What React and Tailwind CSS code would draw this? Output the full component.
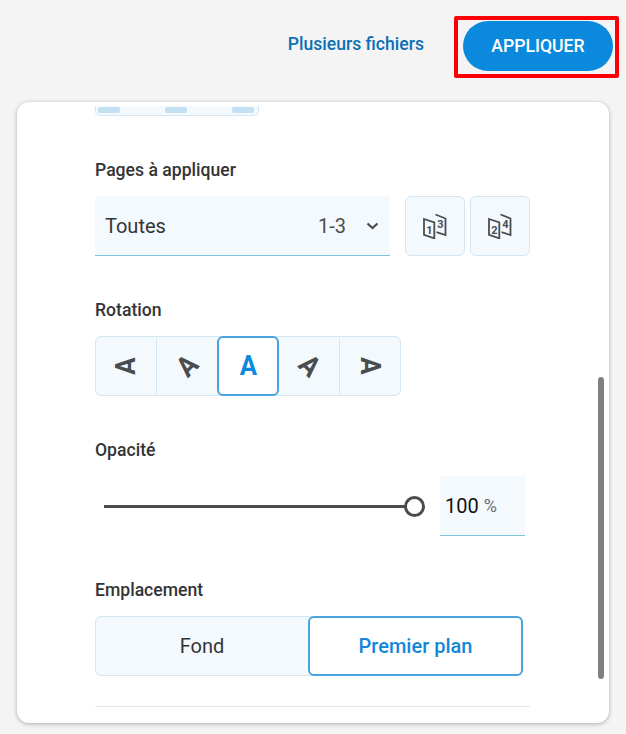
import React from "react";

const F = { fontFamily: "Roboto, 'Liberation Sans', sans-serif" };

function PagesIcon({ a, b }) {
  return (
    <svg className="shrink-0" width="24" height="26" viewBox="0 0 24 26" fill="none" stroke="#4a4d50" strokeWidth="1.800" strokeLinejoin="miter">
      <path d="M1 6 11.300 9.500V25.300L1 21.800z" />
      <path d="M12.500 1.500 22.500 5.500V22L13.500 19.200" />
      <text x="3.200" y="20.500" fontSize="11" fontWeight="700" stroke="none" fill="#4a4d50" style={F}>{a}</text>
      <text x="14.300" y="15" fontSize="11" fontWeight="700" stroke="none" fill="#4a4d50" style={F}>{b}</text>
    </svg>
  );
}

function Label({ children, className = "" }) {
  return <div className={`h-5 leading-5 text-[17.6px] font-medium text-[#333436] ${className}`}>{children}</div>;
}

function Glyph({ className }) {
  return <span className={`text-[28px] leading-none font-bold inline-block scale-x-[0.92] ${className}`}>A</span>;
}

export default function App() {
  return (
    <div className="h-[734px] w-[626px] flex flex-col bg-[#f4f4f4] overflow-hidden" style={F}>
      <div className="h-[102px] shrink-0 flex items-start justify-end pt-[16px] pr-[7px]">
        <span className="text-[17.6px] font-medium text-[#0b70b5] mr-[30px] mt-[18px] leading-5">Plusieurs fichiers</span>
        <div className="border-[4px] border-[#fb0007] rounded-[2px] pl-[5px] pr-[2px] pt-[1px] pb-[3px]">
          <button className="w-[150px] h-[50px] rounded-full bg-[#0a89dd] text-white text-[17.6px] font-medium flex items-center justify-center">APPLIQUER</button>
        </div>
      </div>

      <div className="relative mx-[17px] w-[592px] h-[621px] bg-white rounded-[12px] shadow-[0_1px_4px_rgba(0,0,0,0.3)] overflow-hidden pl-[78px]">
        <div className="h-[4px]" />
        <div className="w-[164px] h-[10px] bg-[#f4f9fd] border border-t-0 border-[#d3e6f3] rounded-b-[5px] flex justify-between pl-[2px] pr-[4px] items-start">
          <div className="w-[22px] h-[6px] mt-[1px] bg-[#c4e0f3] rounded-[2px]" />
          <div className="w-[22px] h-[6px] mt-[1px] bg-[#c4e0f3] rounded-[2px]" />
          <div className="w-[22px] h-[6px] mt-[1px] bg-[#c4e0f3] rounded-[2px]" />
        </div>

        <Label className="mt-[44px]">Pages à appliquer</Label>
        <div className="flex mt-[16px]">
          <div className="w-[295px] h-[60px] flex flex-col">
            <div className="flex-1 bg-[#f4f9fd] rounded-t-[4px] flex items-center pl-[10px] text-[#333436]">
              <span className="text-[20px] flex-1">Toutes</span>
              <span className="text-[20px] text-[#4a4d50]">1-3</span>
              <svg className="ml-[20px] mr-[11px]" width="13" height="8" viewBox="0 0 13 8" fill="none" stroke="#4a4d50" strokeWidth="2.200">
                <path d="M1.500 1.500 6.500 6l5-4.500" />
              </svg>
            </div>
            <div className="h-px bg-[#7ec4d8]" />
          </div>
          <button className="ml-[15px] w-[60px] h-[60px] bg-[#f4f9fd] border border-[#d3e6f3] rounded-[6px] flex items-center justify-center">
            <PagesIcon a="1" b="3" />
          </button>
          <button className="ml-[5px] w-[60px] h-[60px] bg-[#f4f9fd] border border-[#d3e6f3] rounded-[6px] flex items-center justify-center">
            <PagesIcon a="2" b="4" />
          </button>
        </div>

        <Label className="mt-[44px]">Rotation</Label>
        <div className="flex mt-[16px] w-[306px] h-[60px] bg-[#f4f9fd] border border-[#d3e6f3] rounded-[6px]">
          <div className="w-[61px] border-r border-[#d3e6f3] my-[1px] flex items-center justify-center">
            <Glyph className="text-[#4a4d50] -rotate-90" />
          </div>
          <div className="w-[60px] flex items-center justify-center">
            <Glyph className="text-[#4a4d50] -rotate-45" />
          </div>
          <div className="w-[62px] h-[60px] -mt-px bg-white border-2 border-[#4aa3dd] rounded-[6px] flex items-center justify-center">
            <Glyph className="text-[#0a89dd]" />
          </div>
          <div className="w-[61px] border-r border-[#d3e6f3] my-[1px] flex items-center justify-center">
            <Glyph className="text-[#4a4d50] rotate-45" />
          </div>
          <div className="w-[60px] flex items-center justify-center">
            <Glyph className="text-[#4a4d50] rotate-90" />
          </div>
        </div>

        <Label className="mt-[44px]">Opacité</Label>
        <div className="flex items-center mt-[16px]">
          <div className="relative ml-[9px] w-[310px] h-[3px] bg-[#4a4d50]">
            <div className="absolute right-[-11px] top-[-9px] w-[21px] h-[21px] rounded-full border-[3px] border-[#4a4d50] bg-white" />
          </div>
          <div className="ml-[26px] w-[85px] h-[60px] flex flex-col">
            <div className="flex-1 bg-[#f4f9fd] flex items-center pl-[5px]">
              <span className="text-[20px] text-[#111]">100</span>
              <span className="text-[18px] text-[#6b6e70] ml-[5px]">%</span>
            </div>
            <div className="h-px bg-[#7ec4d8]" />
          </div>
        </div>

        <Label className="mt-[44px]">Emplacement</Label>
        <div className="flex mt-[16px] w-[428px] h-[60px] bg-[#f4f9fd] border border-[#d3e6f3] rounded-[6px]">
          <div className="w-[212px] shrink-0 flex items-center justify-center text-[20px] text-[#333436]">Fond</div>
          <div className="w-[215px] shrink-0 h-[60px] -mt-px bg-white border-2 border-[#4aa3dd] rounded-[6px] flex items-center justify-center text-[20px] font-medium text-[#1486d8]">Premier plan</div>
        </div>

        <div className="mt-[30px] w-[435px] border-t border-[#e3e5e7]" />

        <div className="absolute left-[581px] top-[275px] w-[6px] h-[302px] rounded-full bg-[#808080]" />
      </div>
    </div>
  );
}
